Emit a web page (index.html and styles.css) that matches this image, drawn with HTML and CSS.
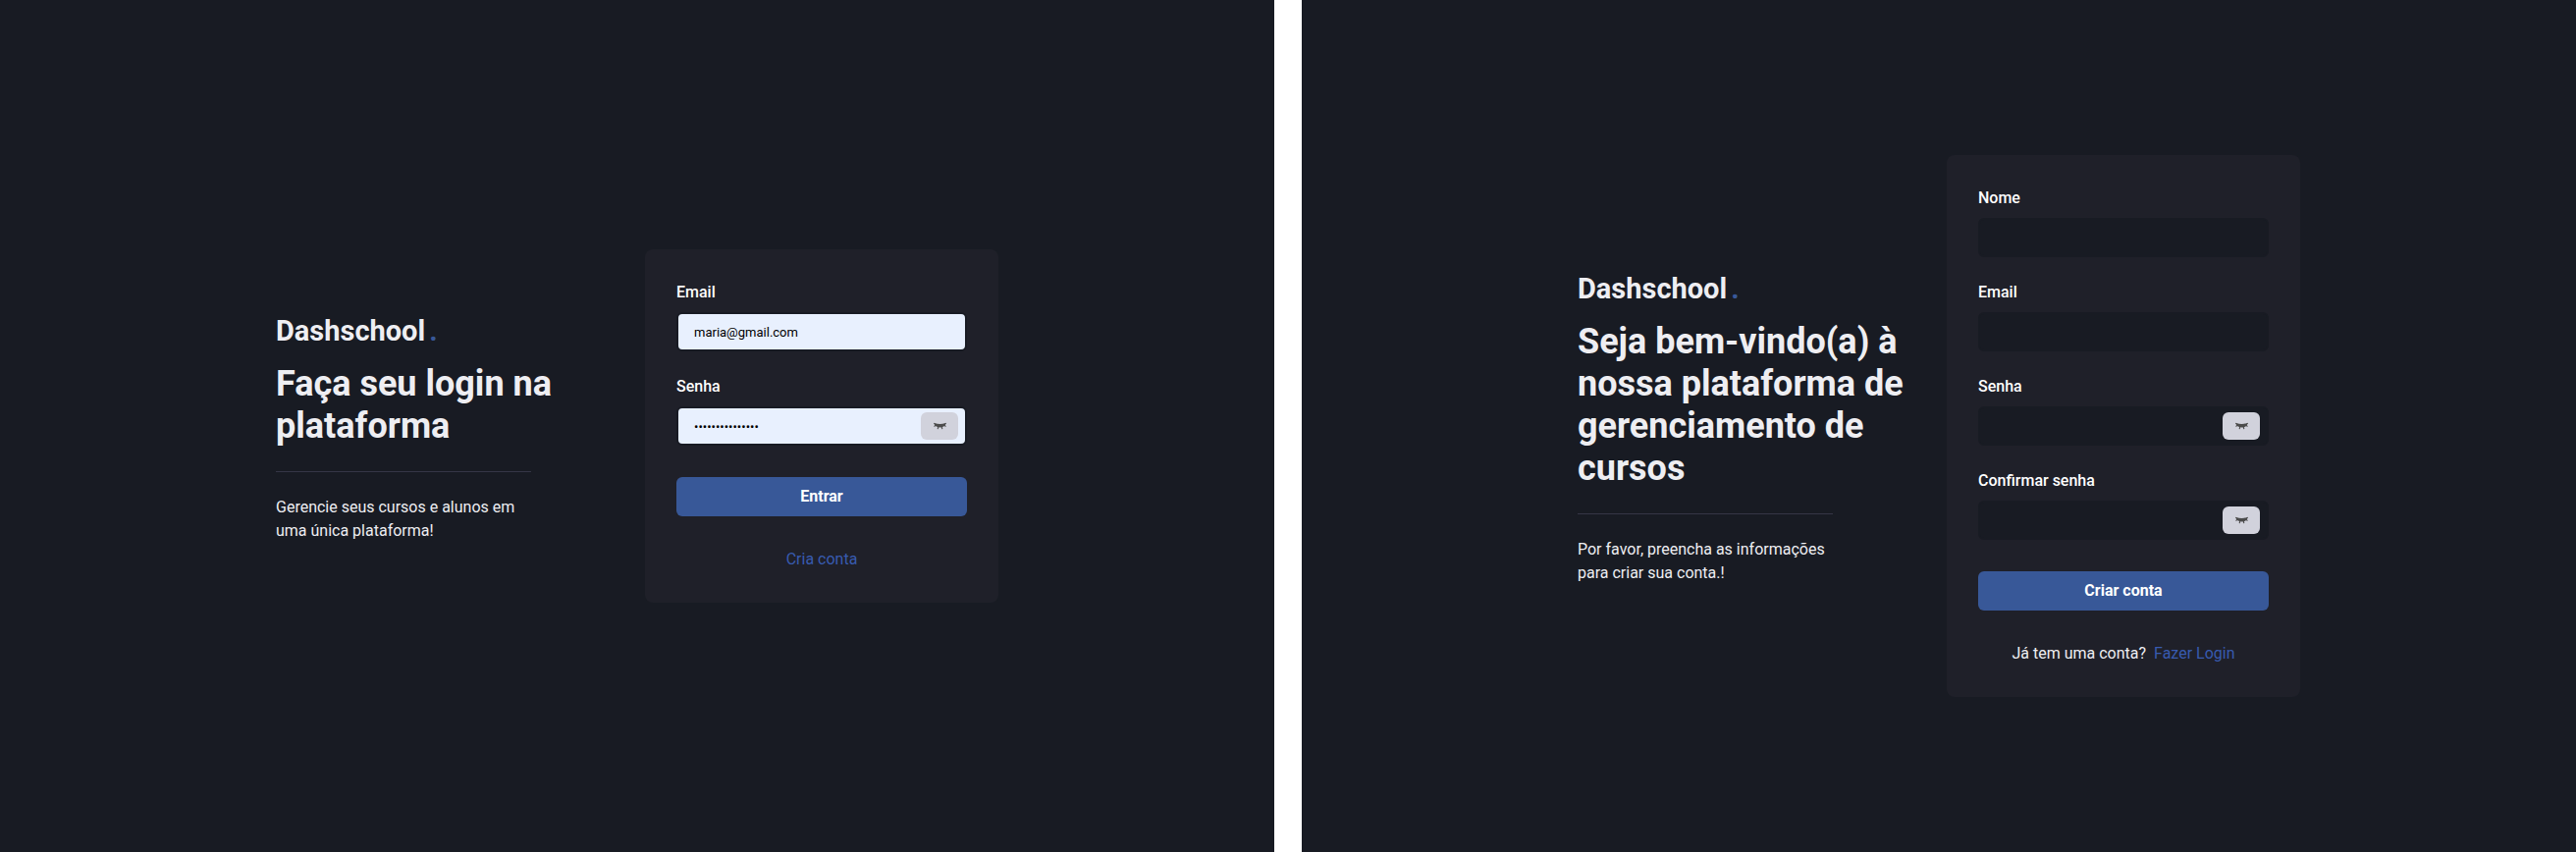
FILE: index.html
```html
<!DOCTYPE html>
<html lang="pt-BR">
<head>
<meta charset="utf-8">
<title>Dashschool</title>
<link rel="stylesheet" href="styles.css">
</head>
<body>
<svg class="sprite" aria-hidden="true">
  <symbol id="eye-closed" viewBox="0 0 13 8">
    <path d="M1 0.9Q6.5 3.2 12 0.9L11.6 3.8Q6.5 7.4 1.4 3.8Z" fill="#4b4b4b"/>
    <path d="M0.4 1L2 3L0.6 4.6M12.6 1L11 3L12.4 4.6M4.7 4.8L4.2 7.2M8.3 4.8L8.8 7.2" fill="none" stroke="#4b4b4b" stroke-width="1.1"/>
  </symbol>
</svg>
<main class="screens">
  <section class="screen">
    <div class="content">
      <div class="intro">
        <p class="logo">Dashschool<span class="logo-dot">.</span></p>
        <h1 class="title">Faça seu login na plataforma</h1>
        <hr class="divider">
        <p class="text">Gerencie seus cursos e alunos em uma única plataforma!</p>
      </div>
      <form class="card">
        <div class="field">
          <label class="label" for="login-email">Email</label>
          <input class="input filled" id="login-email" type="email" value="maria@gmail.com">
        </div>
        <div class="field">
          <label class="label" for="login-password">Senha</label>
          <div class="password">
            <input class="input filled" id="login-password" type="password" value="123456789012345">
            <button class="toggle" type="button" aria-label="Mostrar senha"><svg class="eye"><use href="#eye-closed"/></svg></button>
          </div>
        </div>
        <button class="submit" type="submit">Entrar</button>
        <p class="footer"><a class="link" href="#">Cria conta</a></p>
      </form>
    </div>
  </section>
  <section class="screen">
    <div class="content">
      <div class="intro">
        <p class="logo">Dashschool<span class="logo-dot">.</span></p>
        <h1 class="title">Seja bem-vindo(a) à nossa plataforma de gerenciamento de cursos</h1>
        <hr class="divider">
        <p class="text">Por favor, preencha as informações para criar sua conta.!</p>
      </div>
      <form class="card">
        <div class="field">
          <label class="label" for="name">Nome</label>
          <input class="input" id="name" type="text">
        </div>
        <div class="field">
          <label class="label" for="email">Email</label>
          <input class="input" id="email" type="email">
        </div>
        <div class="field">
          <label class="label" for="password">Senha</label>
          <div class="password">
            <input class="input" id="password" type="password">
            <button class="toggle" type="button" aria-label="Mostrar senha"><svg class="eye"><use href="#eye-closed"/></svg></button>
          </div>
        </div>
        <div class="field">
          <label class="label" for="confirm">Confirmar senha</label>
          <div class="password">
            <input class="input" id="confirm" type="password">
            <button class="toggle" type="button" aria-label="Mostrar senha"><svg class="eye"><use href="#eye-closed"/></svg></button>
          </div>
        </div>
        <button class="submit" type="submit">Criar conta</button>
        <p class="footer">Já tem uma conta?<a class="link" href="#">Fazer Login</a></p>
      </form>
    </div>
  </section>
</main>
</body>
</html>
```
FILE: styles.css
```css
* {
  box-sizing: border-box;
  margin: 0;
}

body {
  background: #fff;
  color: #eeeef2;
  font: 16px/24px Roboto, sans-serif;
}

.sprite {
  display: none;
}

.screens {
  display: grid;
  grid-template-columns: repeat(auto-fit, minmax(min(100%, 800px), 1fr));
  gap: 28px;
  min-height: 100vh;
}

.screen {
  display: flex;
  align-items: center;
  justify-content: center;
  padding: 24px;
  background: #181b23;
}

.content {
  display: grid;
  grid-template-columns: 1fr 360px;
  gap: 16px;
  align-items: center;
  width: 100%;
  max-width: 736px;
}

.logo {
  margin-bottom: 10px;
  font-size: 29px;
  line-height: 45px;
  font-weight: 700;
}

.logo-dot {
  margin-left: 4px;
  color: #385898;
}

.title {
  font-size: 36px;
  line-height: 43px;
  font-weight: 700;
}

.divider {
  max-width: 260px;
  margin: 24px 0;
  border: 0;
  border-top: 1px solid #353646;
}

.text {
  max-width: 260px;
}

.card {
  display: flex;
  flex-direction: column;
  gap: 24px;
  padding: 32px;
  border-radius: 8px;
  background: #1f2029;
}

.field {
  display: flex;
  flex-direction: column;
  gap: 8px;
}

.label {
  color: #fff;
  font-weight: 500;
}

.input {
  display: block;
  width: 100%;
  height: 40px;
  padding: 0 16px;
  border: 2px solid #181b23;
  border-radius: 6px;
  background: #181b23;
  color: #eeeef2;
  font: 13px Roboto, sans-serif;
  outline: 0;
}

.filled {
  background: #e8f0fe;
  color: #000;
}

.password {
  position: relative;
}

.toggle {
  position: absolute;
  top: 6px;
  right: 9px;
  display: flex;
  align-items: center;
  justify-content: center;
  width: 38px;
  height: 28px;
  padding: 0;
  border: 0;
  border-radius: 6px;
  background: #d1d2dc;
}

.eye {
  width: 13px;
  height: 8px;
}

.submit {
  height: 40px;
  margin-top: 8px;
  border: 0;
  border-radius: 6px;
  background: #385898;
  color: #fff;
  font: 700 16px/24px Roboto, sans-serif;
}

.footer {
  display: flex;
  justify-content: center;
  gap: 8px;
  margin-top: 8px;
}

.link {
  color: #385bb0;
  text-decoration: none;
}
```
